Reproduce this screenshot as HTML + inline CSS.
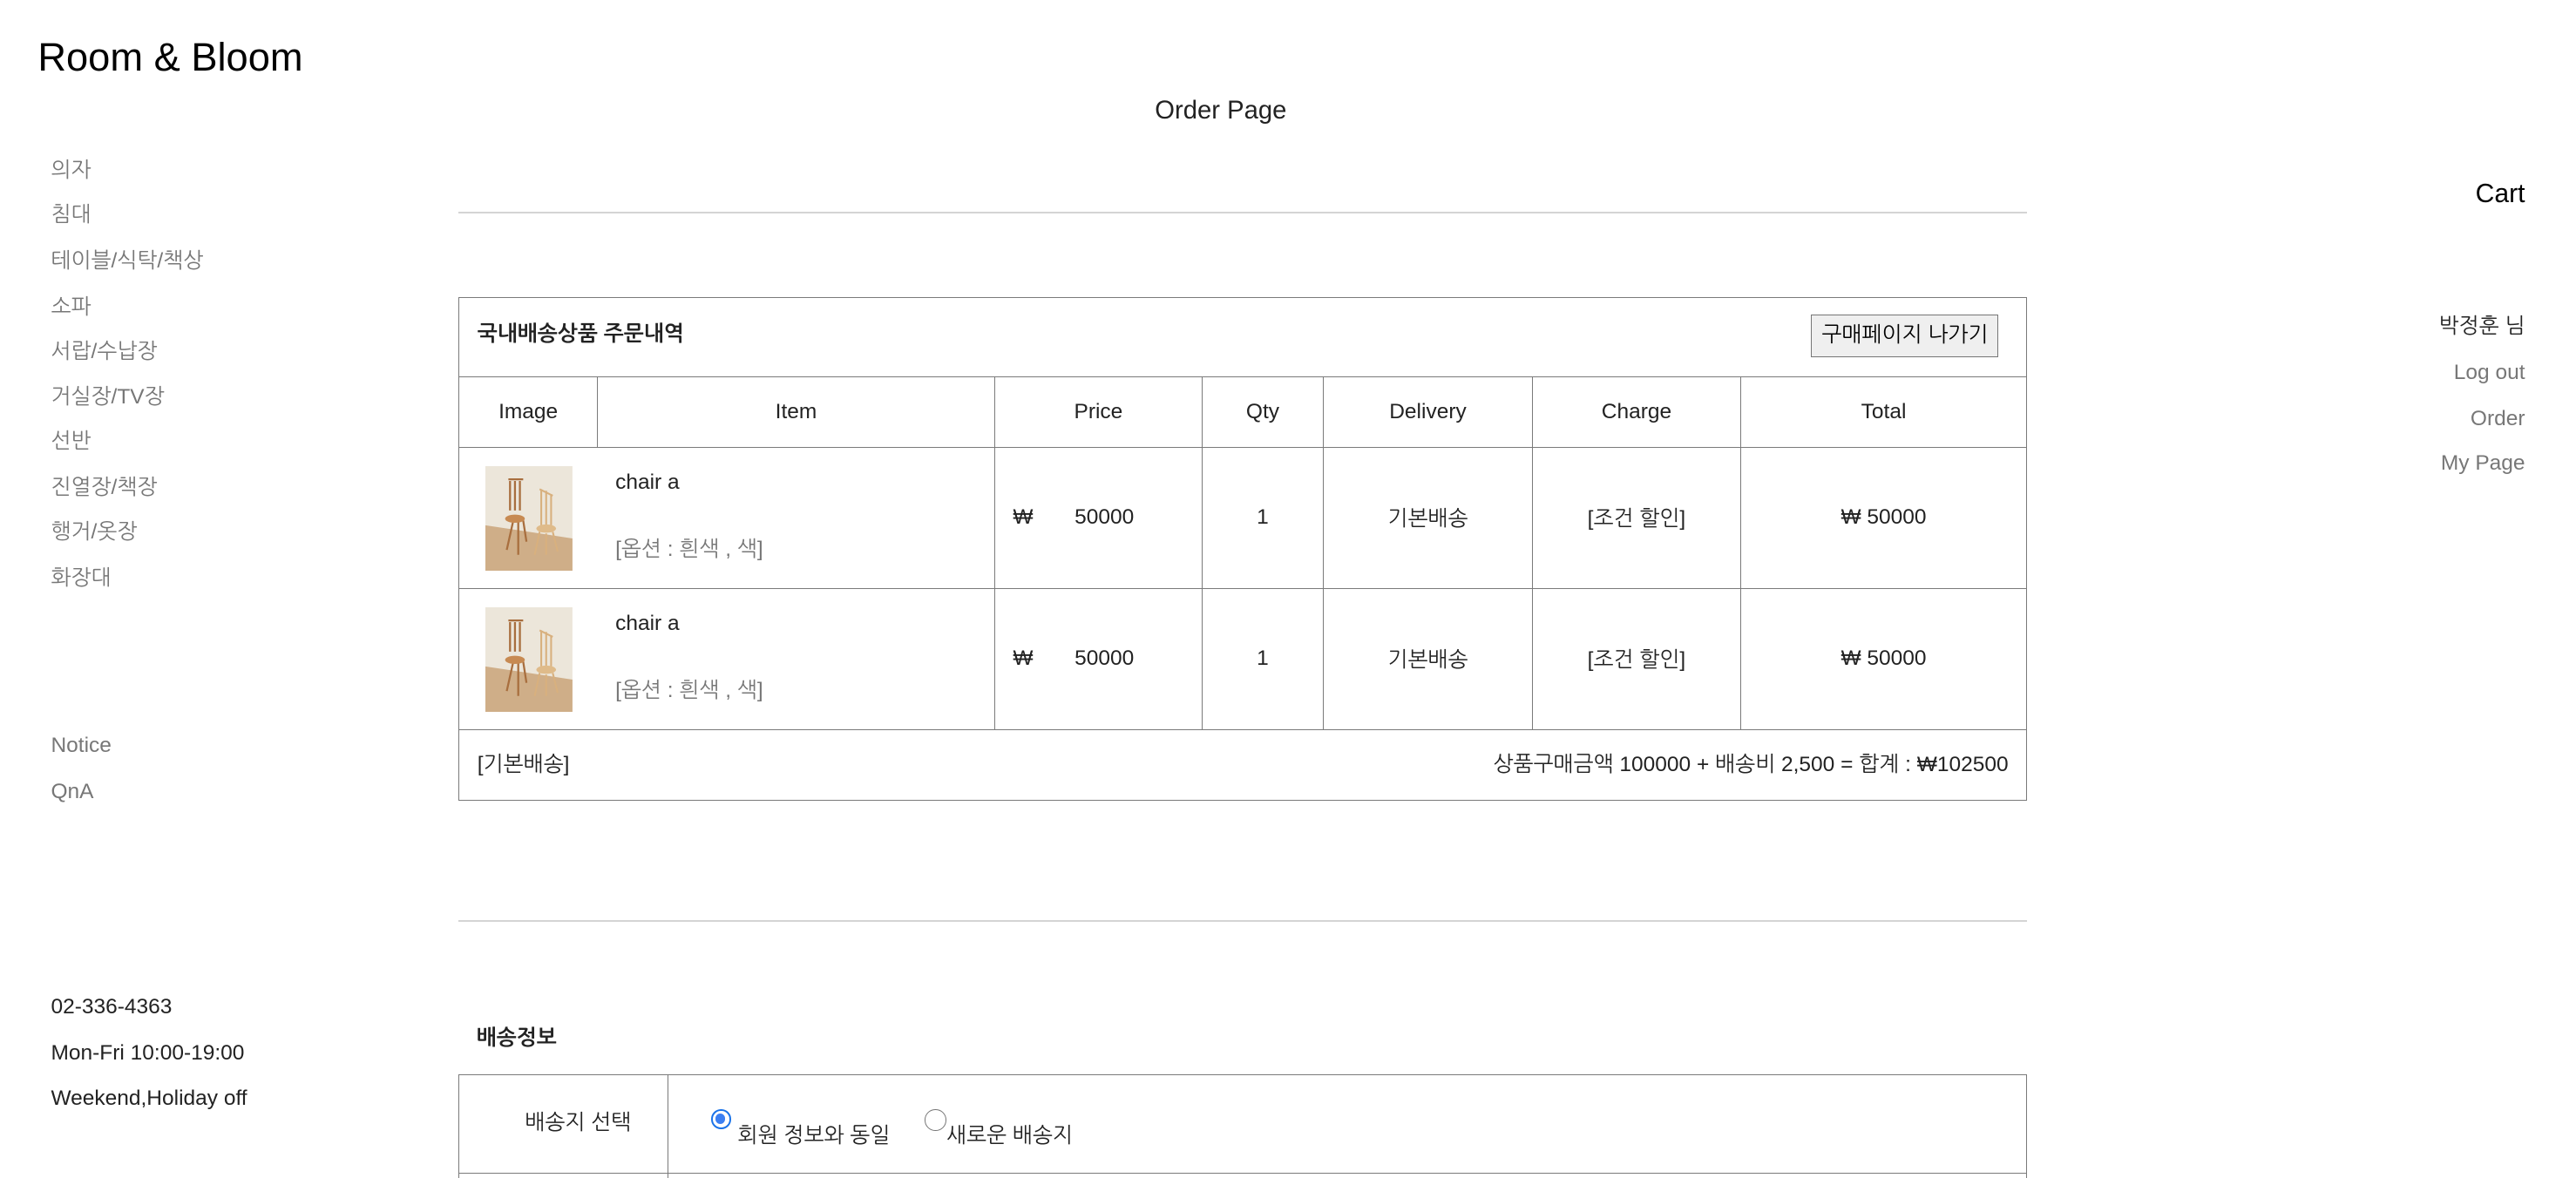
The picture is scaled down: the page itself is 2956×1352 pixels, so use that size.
<!DOCTYPE html>
<html><head><meta charset="utf-8">
<style>
html,body{margin:0;padding:0;background:#fff;overflow:hidden}
body{width:2956px;height:1352px}
#w{zoom:1.8852;position:relative;width:1568px;height:717px;font-family:"Liberation Sans","NanumGothic","Noto Sans CJK KR",sans-serif;color:#222}
.a{position:absolute;white-space:nowrap;line-height:20px}
.g{color:#777;font-size:13px}
.d{color:#222;font-size:13px}
.hr{position:absolute;left:279px;width:955px;height:1px;background:#d4d4d4}
table{position:absolute;border-collapse:collapse;font-size:13px;color:#222}
td{border:1px solid #7a7a7a;padding:0;text-align:center}
.chair{width:53px;height:64px;display:block}
</style></head><body><div id="w">
<div class="a" style="left:23px;top:20px;font-size:24px;line-height:30px;color:#000">Room &amp; Bloom</div>
<div class="a" style="left:703px;top:58px;font-size:15.5px;color:#222">Order Page</div>

<div class="a g" style="left:31px;top:94px">의자</div>
<div class="a g" style="left:31px;top:121px">침대</div>
<div class="a g" style="left:31px;top:149px">테이블/식탁/책상</div>
<div class="a g" style="left:31px;top:177px">소파</div>
<div class="a g" style="left:31px;top:204px">서랍/수납장</div>
<div class="a g" style="left:31px;top:232px">거실장/TV장</div>
<div class="a g" style="left:31px;top:259px">선반</div>
<div class="a g" style="left:31px;top:287px">진열장/책장</div>
<div class="a g" style="left:31px;top:314px">행거/옷장</div>
<div class="a g" style="left:31px;top:342px">화장대</div>
<div class="a g" style="left:31px;top:444px">Notice</div>
<div class="a g" style="left:31px;top:472px">QnA</div>
<div class="a d" style="left:31px;top:603px">02-336-4363</div>
<div class="a d" style="left:31px;top:631px">Mon-Fri 10:00-19:00</div>
<div class="a d" style="left:31px;top:659px">Weekend,Holiday off</div>

<div class="a" style="right:31px;top:108px;font-size:16px;color:#000">Cart</div>
<div class="a" style="right:31px;top:189px;font-size:13px;color:#222">박정훈 님</div>
<div class="a g" style="right:31px;top:217px">Log out</div>
<div class="a g" style="right:31px;top:245px">Order</div>
<div class="a g" style="right:31px;top:272px">My Page</div>

<div class="hr" style="top:129px"></div>
<div class="hr" style="top:560px"></div>

<table style="left:279px;top:181px;width:955px">
<tr style="height:48px"><td colspan="7" style="text-align:left;position:relative">
<span style="position:absolute;left:11px;top:12px;font-weight:bold;font-size:13px;line-height:20px">국내배송상품 주문내역</span>
<span style="position:absolute;left:823px;top:10px;width:114px;height:26px;border:1px solid #767676;background:#efefef;box-sizing:border-box;text-align:center;line-height:24px;font-size:13px;color:#000">구매페이지 나가기</span>
</td></tr>
<tr style="height:43px"><td style="width:84px">Image</td><td style="width:241px">Item</td><td style="width:126px">Price</td><td style="width:73px">Qty</td><td style="width:127px">Delivery</td><td style="width:126px">Charge</td><td>Total</td></tr>
<tr style="height:86px"><td colspan="2" style="text-align:left;position:relative">
<svg class="chair" style="position:absolute;left:16px;top:11px" viewBox="0 0 53 64"><rect width="53" height="64" fill="#ece6da"/><polygon points="0,36 53,44 53,64 0,64" fill="#cfae88"/><g stroke="#a86e3e" stroke-width="1.2" fill="none"><path d="M14 8h9M15 9v18M18 9v18M21 9v18M17 33l-4 18M23 33l2 13M20 34v20"/></g><ellipse cx="18" cy="32" rx="6" ry="2.5" fill="#c78a52"/><g stroke="#d8b07e" stroke-width="1.1" fill="none"><path d="M33 14l8 4M34 14v22M37 15v21M40 17v19M33 40l-3 14M41 40l3 12M37 41v13"/></g><ellipse cx="37" cy="38" rx="6" ry="2.5" fill="#dfbb8a"/></svg>
<span class="a" style="left:95px;top:11px">chair a</span>
<span class="a" style="left:95px;top:52px;color:#777">[옵션 : 흰색 , 색]</span></td>
<td style="text-align:left;padding-left:11px">₩&nbsp;&nbsp;&nbsp;&nbsp;&nbsp;&nbsp;&nbsp;50000</td><td>1</td><td>기본배송</td><td>[조건 할인]</td><td>₩ 50000</td></tr>
<tr style="height:86px"><td colspan="2" style="text-align:left;position:relative">
<svg class="chair" style="position:absolute;left:16px;top:11px" viewBox="0 0 53 64"><rect width="53" height="64" fill="#ece6da"/><polygon points="0,36 53,44 53,64 0,64" fill="#cfae88"/><g stroke="#a86e3e" stroke-width="1.2" fill="none"><path d="M14 8h9M15 9v18M18 9v18M21 9v18M17 33l-4 18M23 33l2 13M20 34v20"/></g><ellipse cx="18" cy="32" rx="6" ry="2.5" fill="#c78a52"/><g stroke="#d8b07e" stroke-width="1.1" fill="none"><path d="M33 14l8 4M34 14v22M37 15v21M40 17v19M33 40l-3 14M41 40l3 12M37 41v13"/></g><ellipse cx="37" cy="38" rx="6" ry="2.5" fill="#dfbb8a"/></svg>
<span class="a" style="left:95px;top:11px">chair a</span>
<span class="a" style="left:95px;top:52px;color:#777">[옵션 : 흰색 , 색]</span></td>
<td style="text-align:left;padding-left:11px">₩&nbsp;&nbsp;&nbsp;&nbsp;&nbsp;&nbsp;&nbsp;50000</td><td>1</td><td>기본배송</td><td>[조건 할인]</td><td>₩ 50000</td></tr>
<tr style="height:43px"><td colspan="7" style="position:relative">
<span class="a" style="left:11px;top:11px">[기본배송]</span>
<span class="a" style="right:11px;top:11px">상품구매금액 100000 + 배송비 2,500 = 합계 : ₩102500</span></td></tr>
</table>

<div class="a" style="left:290px;top:622px;font-weight:bold;font-size:13px">배송정보</div>
<table style="left:279px;top:654px;width:955px">
<tr style="height:60px"><td style="width:127px;position:relative"><span class="a" style="left:40px;top:19px">배송지 선택</span></td>
<td style="text-align:left;position:relative">
<span style="position:absolute;left:26px;top:21px;width:12px;height:12px;border:1.5px solid #1a73e8;border-radius:50%;box-sizing:border-box;background:#fff"><span style="position:absolute;left:1.5px;top:1.5px;width:6px;height:6px;border-radius:50%;background:#3b7ff2"></span></span>
<span class="a" style="left:42px;top:27px">회원 정보와 동일</span>
<span style="position:absolute;left:156px;top:21px;width:13px;height:13px;border:1px solid #767676;border-radius:50%;box-sizing:border-box"></span>
<span class="a" style="left:169px;top:27px">새로운 배송지</span>
</td></tr>
<tr style="height:20px"><td></td><td></td></tr>
</table>
</div></body></html>
